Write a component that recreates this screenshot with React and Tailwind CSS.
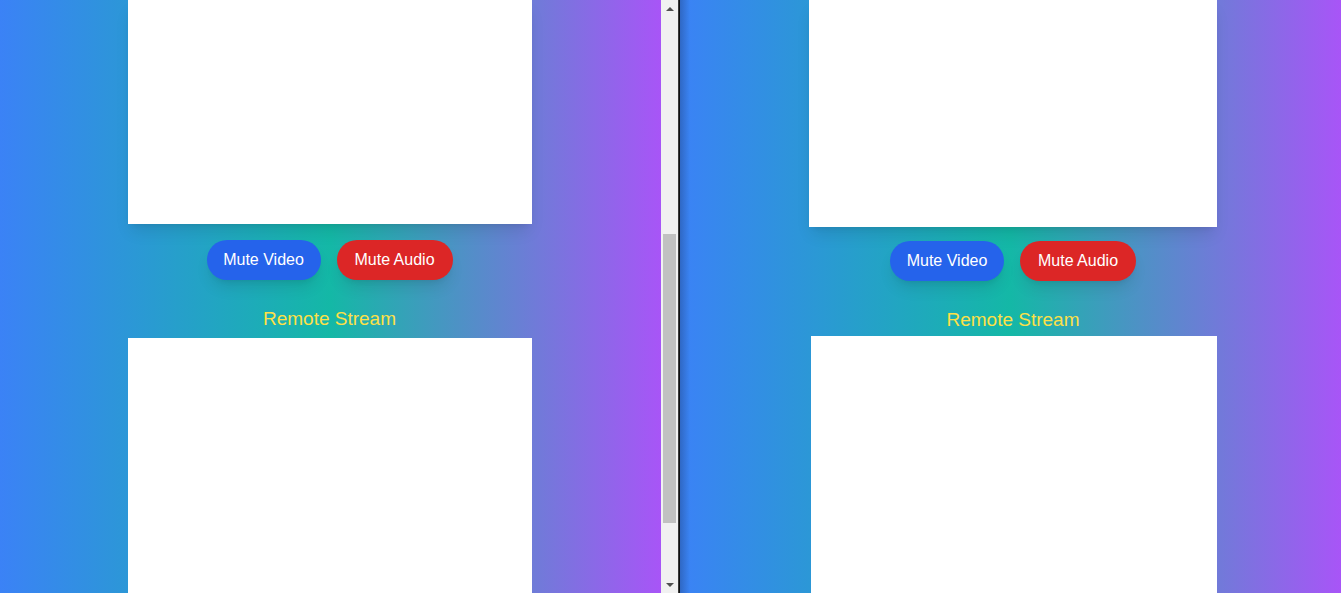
const font = { fontFamily: '"Liberation Sans", Arial, sans-serif' };

const Controls = ({ className = "" }) => (
  <div className={`flex justify-center gap-4 ${className}`}>
    <button className="w-[114px] rounded-full bg-[#2563eb] py-2 text-center text-base leading-6 text-white shadow-lg">
      Mute Video
    </button>
    <button className="w-[116px] rounded-full bg-[#dc2626] py-2 text-center text-base leading-6 text-white shadow-lg">
      Mute Audio
    </button>
  </div>
);

const Scrollbar = () => (
  <div className="flex h-full w-[17px] flex-col bg-[#f1f1f1]">
    <div className="flex h-[17px] items-center justify-center">
      <div className="h-0 w-0 border-x-[4px] border-b-[4px] border-x-transparent border-b-[#505050]" />
    </div>
    <div className="flex-1 pl-[2px] pr-[1px]">
      <div className="mt-[217px] h-[289px] w-[13px] bg-[#c1c1c1]" />
    </div>
    <div className="flex h-[17px] items-center justify-center">
      <div className="h-0 w-0 border-x-[4px] border-t-[4px] border-x-transparent border-t-[#505050]" />
    </div>
  </div>
);

const paneBg = "bg-linear-to-r/srgb from-[#3b82f6] via-[#14b8a6] to-[#a855f7]";

export default function App() {
  return (
    <div className="flex h-[593px] w-[1341px] overflow-hidden" style={font}>
      {/* left window */}
      <div className={`flex h-full w-[661px] flex-col ${paneBg}`}>
        <div className="ml-[128px] h-[224px] w-[404px] bg-white shadow-lg" />
        <Controls className="mt-4 -ml-[2px]" />
        <h2 className="mt-[25px] -ml-[2px] text-center text-[19px] leading-7 text-[#fde047]">Remote Stream</h2>
        <div className="ml-[128px] mt-[5px] w-[404px] flex-1 bg-white" />
      </div>
      <Scrollbar />
      <div className="h-full w-[1px] bg-[#3a3a3a]" />
      <div className="h-full w-[1px] bg-[#111]" />

      {/* right window */}
      <div className={`relative flex h-full w-[661px] flex-col ${paneBg}`}>
        <div className="pointer-events-none absolute inset-y-0 left-0 w-[10px] bg-linear-to-r from-black/20 to-transparent" />
        <div className="ml-[129px] h-[227px] w-[408px] bg-white shadow-lg" />
        <Controls className="mt-[14px] ml-[5px]" />
        <h2 className="mt-[25px] ml-[5px] text-center text-[19px] leading-7 text-[#fde047]">Remote Stream</h2>
        <div className="ml-[131px] mt-[2px] w-[406px] flex-1 bg-white" />
      </div>
    </div>
  );
}
